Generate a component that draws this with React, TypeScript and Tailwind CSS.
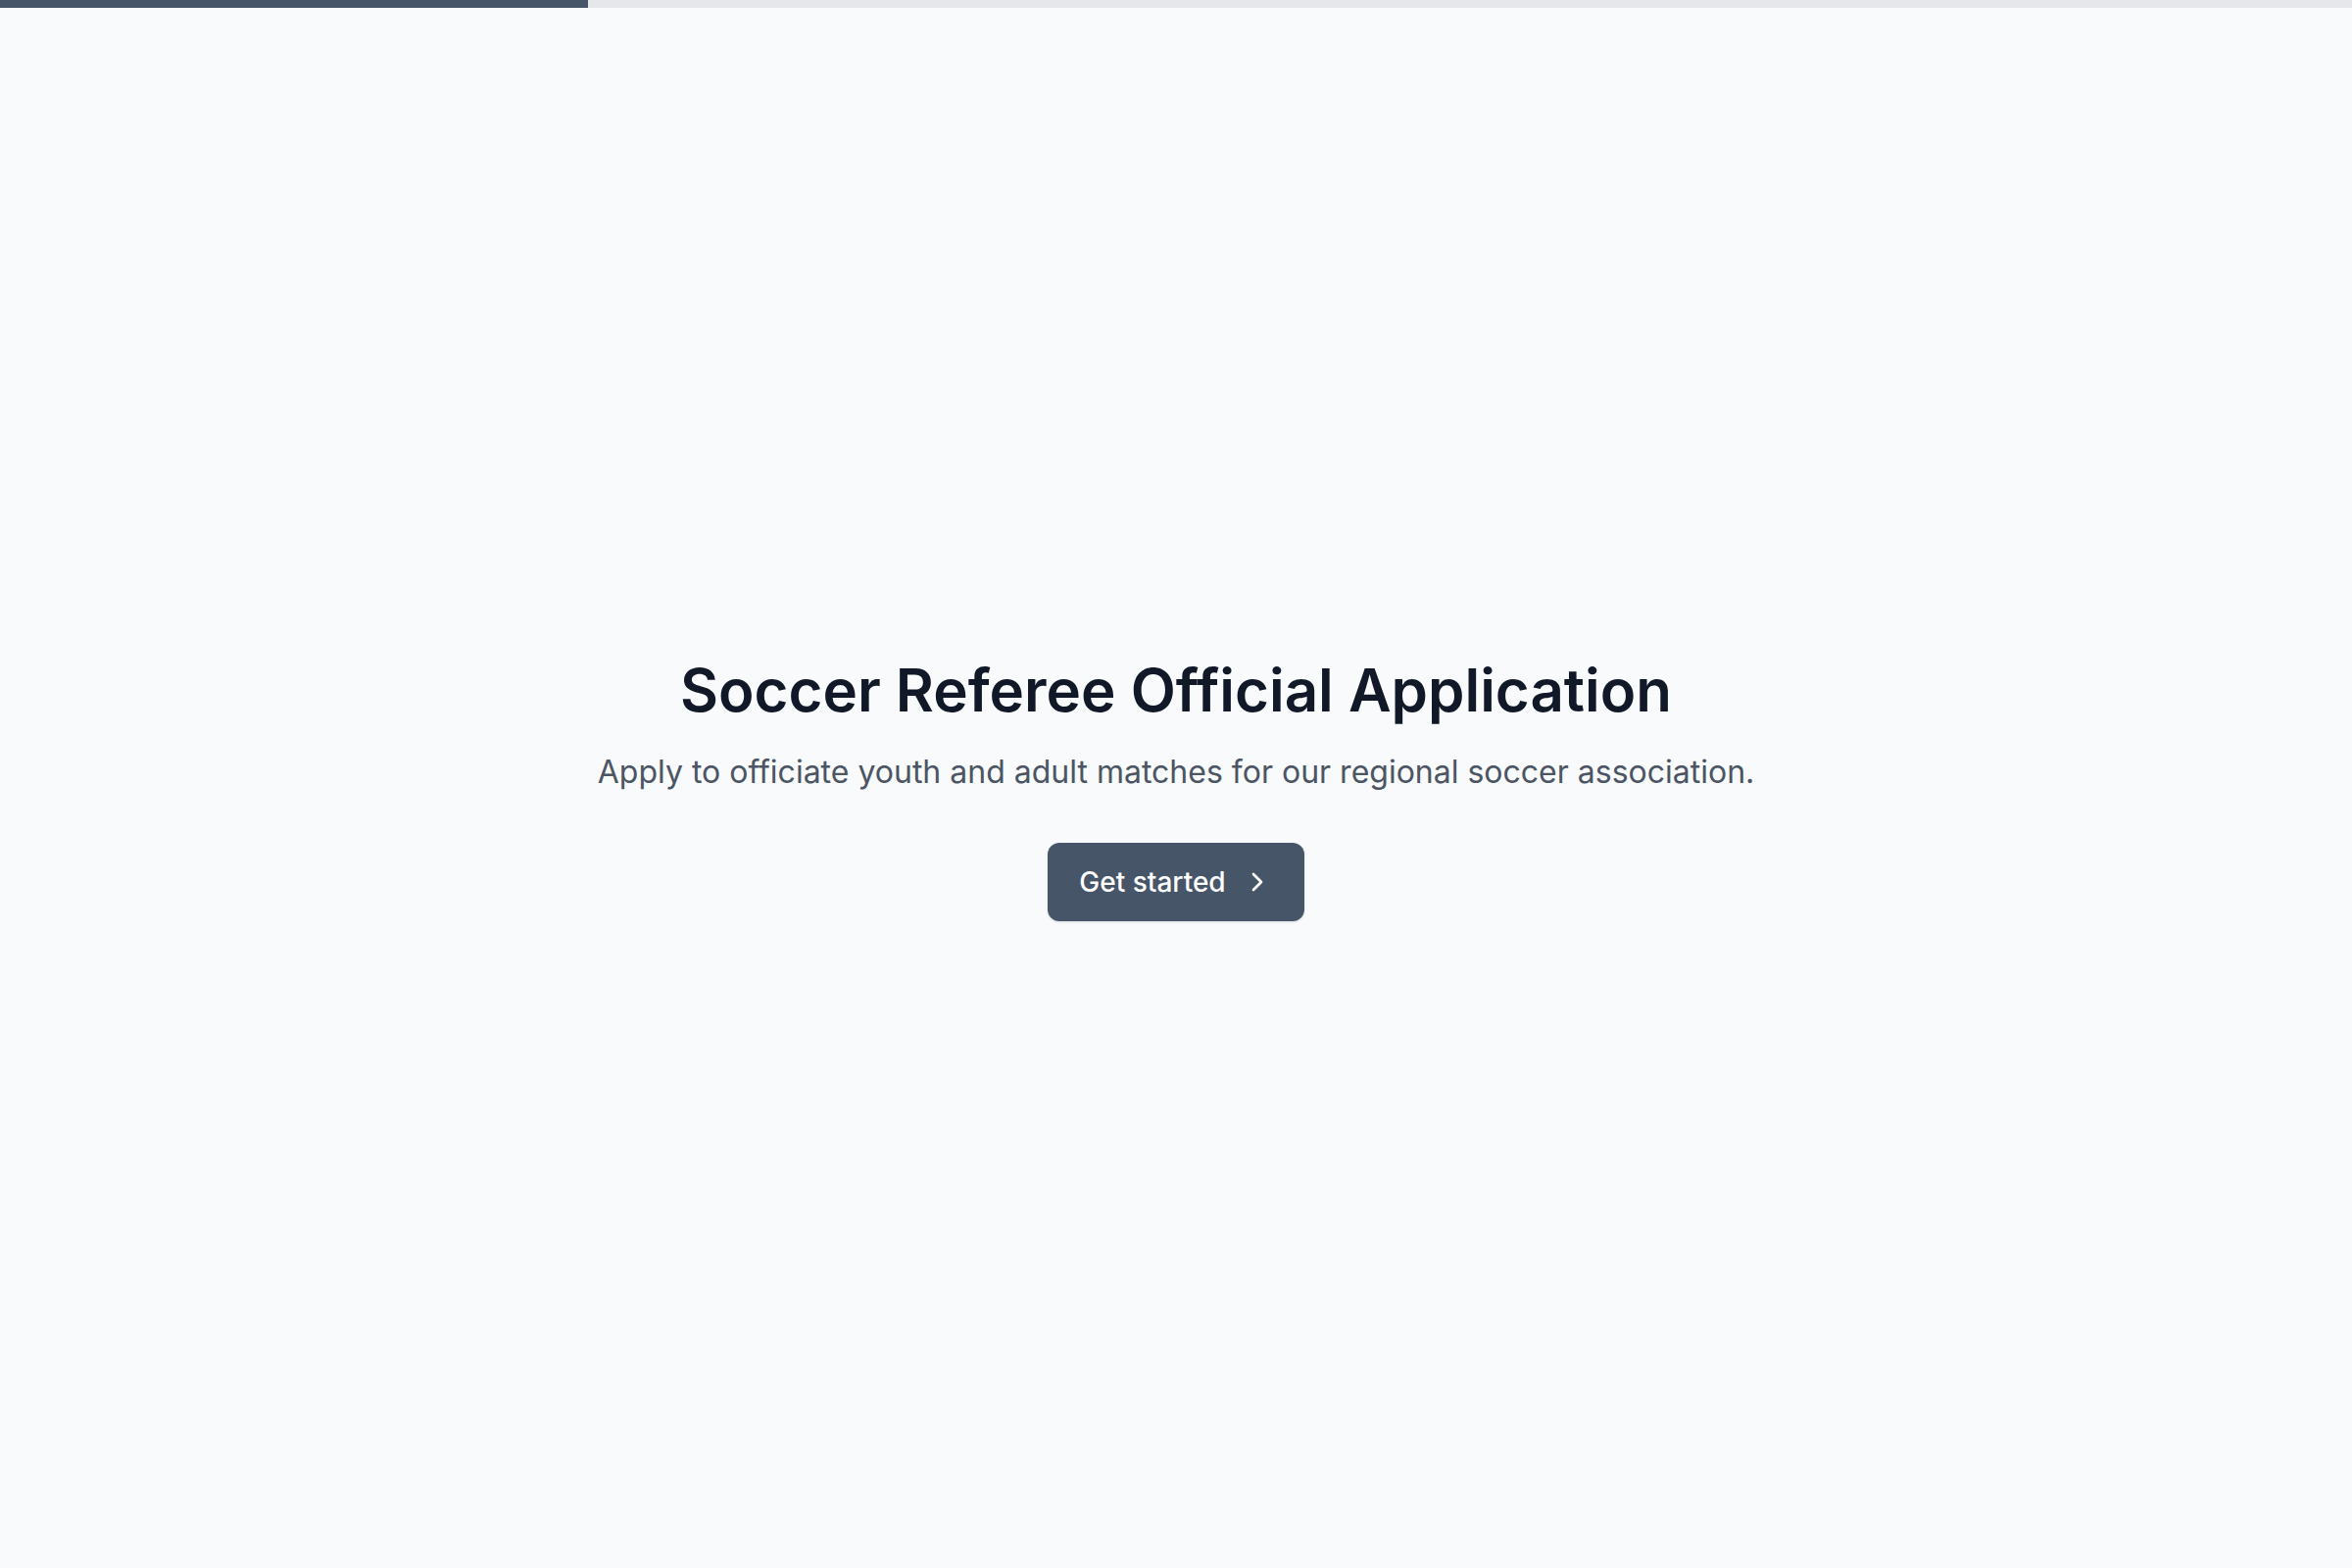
import { ChevronRight } from "lucide-react";

export default function App() {
  const progress = 25;

  return (
    <div className="min-h-screen bg-[#f8fafc] font-['Inter',sans-serif] [font-variant-ligatures:none] flex flex-col">
      <div className="h-2 w-full bg-[#e5e7eb]">
        <div className="h-full bg-[#475569]" style={{ width: `${progress}%` }} />
      </div>
      <main className="flex flex-1 flex-col items-center justify-center px-8 pb-2 text-center">
        <h1 className="pt-1 text-[60px] leading-[80px] font-semibold text-[#111827]">
          Soccer Referee Official Application
        </h1>
        <p className="mt-5 text-[32px] leading-[48px] text-[#4b5563]">
          Apply to officiate youth and adult matches for our regional soccer association.
        </p>
        <button className="mt-12 flex h-20 items-center gap-4 rounded-xl bg-[#475569] px-8 text-[28px] font-medium text-white shadow-sm">
          Get started
          <ChevronRight className="h-8 w-8" strokeWidth={2} />
        </button>
      </main>
    </div>
  );
}
